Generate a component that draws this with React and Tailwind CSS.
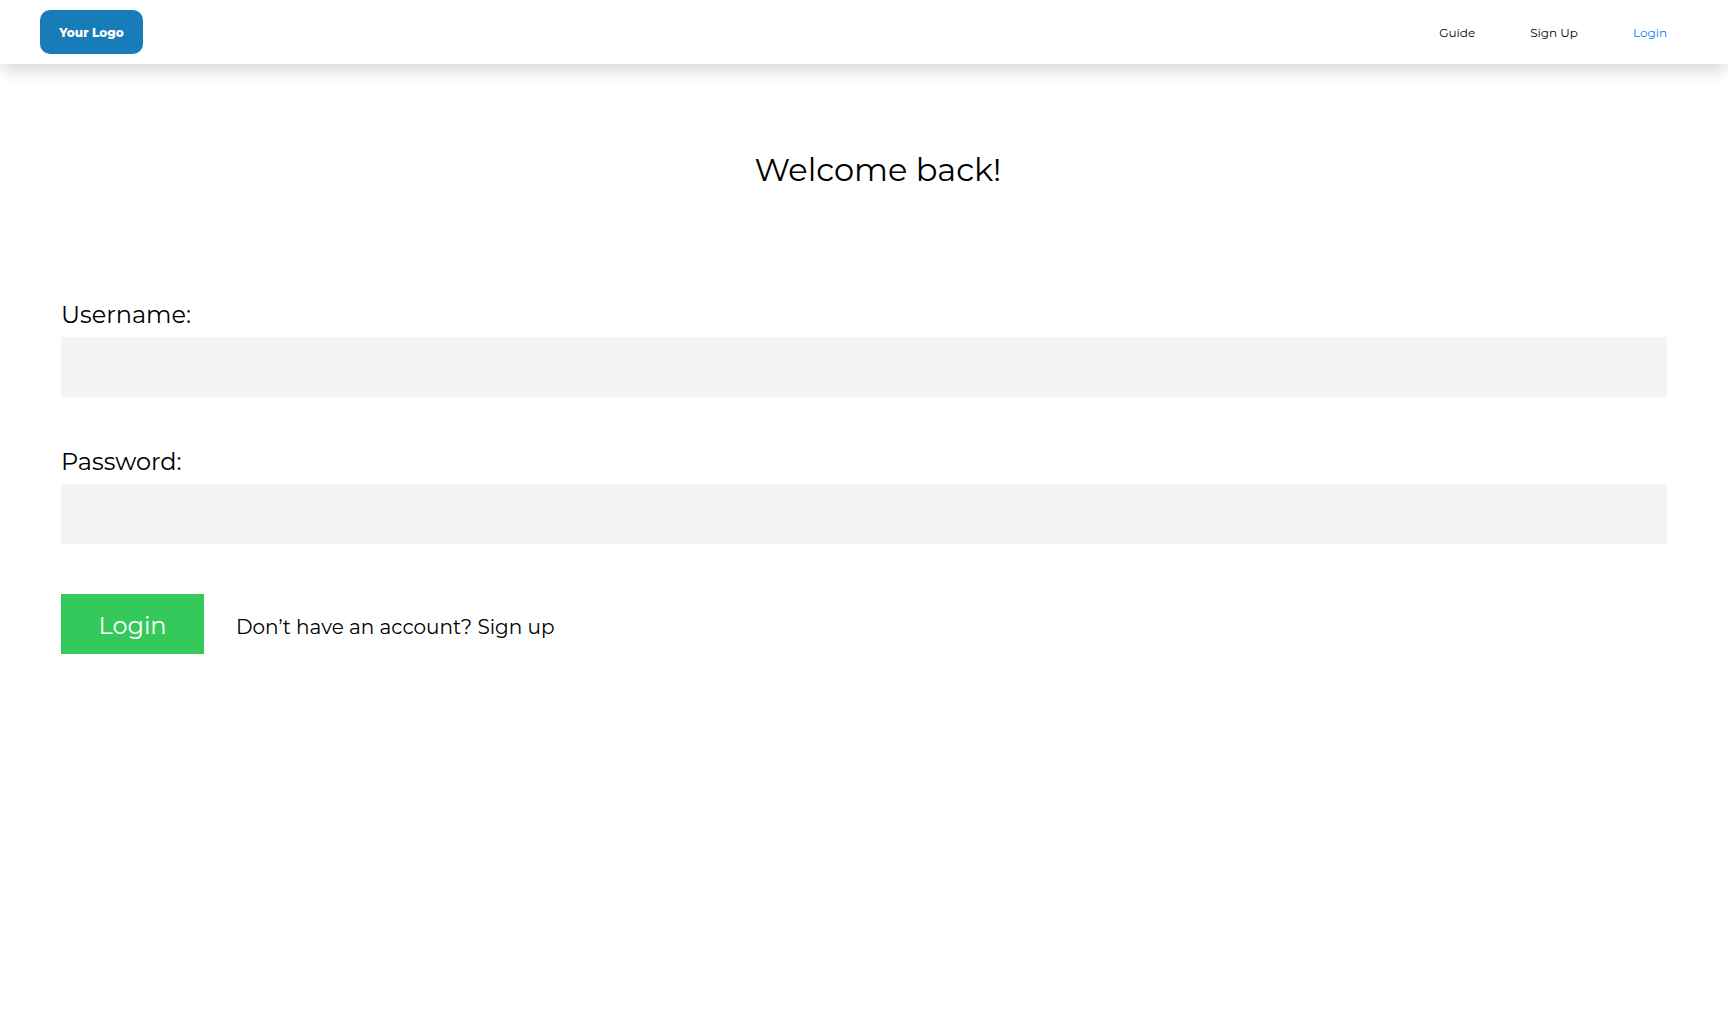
const navLinks = [
  { label: "Guide", color: "text-black" },
  { label: "Sign Up", color: "text-black" },
  { label: "Login", color: "text-[#007aff]" },
];

function Header() {
  return (
    <header className="flex h-16 items-center justify-between bg-white pr-[61px] pl-10 shadow-[0_8px_16px_-2px_rgba(0,0,0,0.16)]">
      <a
        href="#home"
        className="flex h-11 w-[103px] items-center justify-center rounded-[10px] bg-[#177cb8] pt-[2px] text-xs font-extrabold text-white"
      >
        Your Logo
      </a>
      <nav className="flex items-center gap-[55px] pt-[2px] text-xs">
        {navLinks.map((link) => (
          <a key={link.label} href="#nav" className={link.color}>
            {link.label}
          </a>
        ))}
      </nav>
    </header>
  );
}

function Field({ id, label, type }) {
  return (
    <div className="flex flex-col">
      <label htmlFor={id} className="pb-[6px] text-2xl leading-8">
        {label}
      </label>
      <input
        id={id}
        type={type}
        className="h-[60px] w-full bg-[#f4f4f4] px-4 text-2xl outline-none"
      />
    </div>
  );
}

export default function App() {
  return (
    <div className="min-h-screen bg-white font-['Montserrat','Inter',sans-serif] text-black">
      <Header />
      <main className="px-[61px] pt-[86px]">
        <h1 className="pl-7 text-center text-[32px] leading-10">Welcome back!</h1>
        <form
          className="mt-[109px] flex flex-col"
          onSubmit={(e) => e.preventDefault()}
        >
          <div className="flex flex-col gap-[49px]">
            <Field id="username" label="Username:" type="text" />
            <Field id="password" label="Password:" type="password" />
          </div>
          <div className="mt-[50px] flex items-center gap-8">
            <button
              type="submit"
              className="h-[60px] w-[143px] bg-[#35c95b] pt-1 text-2xl text-white"
            >
              Login
            </button>
            <a href="#signup" className="pt-[6px] text-xl">
              Don’t have an account? Sign up
            </a>
          </div>
        </form>
      </main>
    </div>
  );
}
